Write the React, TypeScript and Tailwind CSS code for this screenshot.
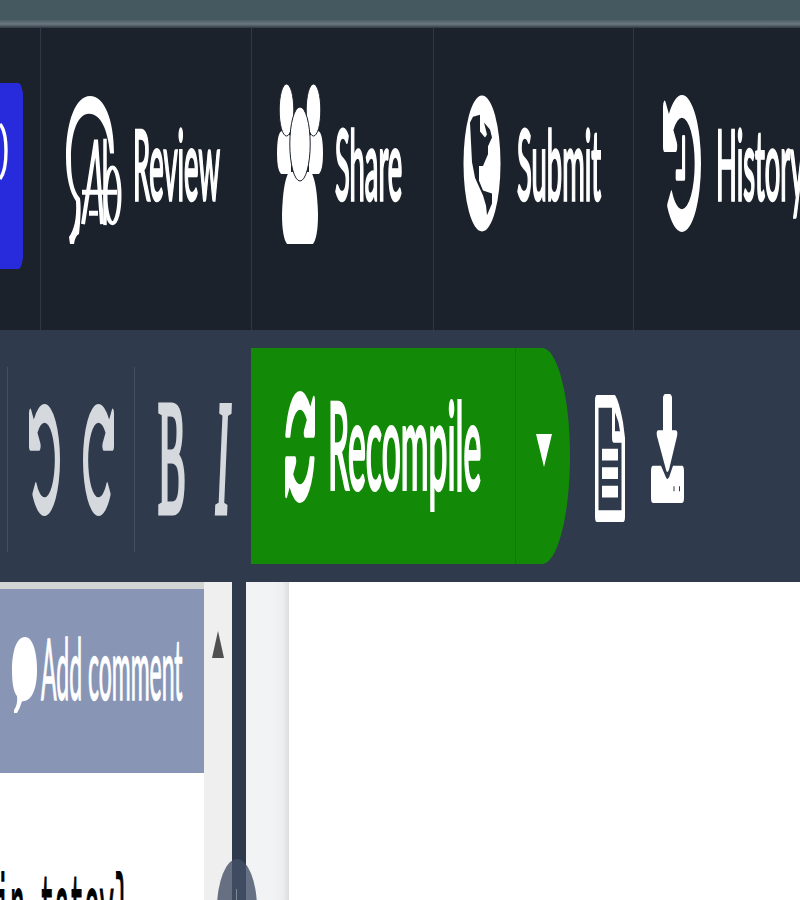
import type { ReactNode } from "react";

const UNDO =
  "M1664 896q0 156-61 298t-164 245-245 164-298 61q-172 0-327-72.5t-264-204.5q-7-10-6.5-22.5t8.5-20.5l137-138q10-9 25-9 16 2 23 12 73 95 179 147t225 52q104 0 198.5-40.5t163.5-109.5 109.5-163.5 40.5-198.5-40.5-198.5-109.5-163.5-163.5-109.5-198.5-40.5q-98 0-188 35.5t-160 101.5l137 138q31 30 14 69-17 40-59 40h-448q-26 0-45-19t-19-45v-448q0-42 40-59 39-17 69 14l130 129q107-101 244.5-156.5t284.5-55.5q156 0 298 61t245 164 164 245 61 298z";
const HAND =
  "M1024 608v448q0 14-9 23t-23 9h-320q-14 0-23-9t-9-23v-64q0-14 9-23t23-9h224v-352q0-14 9-23t23-9h64q14 0 23 9t9 23z";
const REFRESH =
  "M1639 1056q0 5-1 7-64 268-268 434.5t-478 166.5q-146 0-282.5-55t-243.5-157l-129 129q-19 19-45 19t-45-19-19-45v-448q0-26 19-45t45-19h448q26 0 45 19t19 45-19 45l-137 137q71 66 161 102t187 36q134 0 250-65t186-179q11-17 53-117 8-23 30-23h192q13 0 22.5 9.5t9.5 22.5zm25-800v448q0 26-19 45t-45 19h-448q-26 0-45-19t-19-45 19-45l138-138q-148-137-349-137-134 0-250 65t-186 179q-11 17-53 117-8 23-30 23h-199q-13 0-22.5-9.5t-9.5-22.5v-7q65-268 270-434.5t480-166.5q146 0 284 55.5t245 156.5l130-129q19-19 45-19t45 19 19 45z";

function Glyph({ box, className, children }: { box: string; className: string; children: ReactNode }) {
  return (
    <svg viewBox={box} preserveAspectRatio="none" fill="currentColor" className={`block shrink-0 overflow-visible ${className}`}>
      {children}
    </svg>
  );
}

// Tall, condensed label: full-size type squeezed horizontally inside a fixed box.
function Label({ children, box, type }: { children: string; box: string; type: string }) {
  return (
    <span className={`block shrink-0 ${box}`}>
      <span className={`block w-max origin-top-left whitespace-nowrap leading-none ${type}`}>{children}</span>
    </span>
  );
}

const NAV_TYPE = "scale-x-[0.282] text-[97px] [-webkit-text-stroke:3.5px_white]";

function NavBar() {
  return (
    <nav className="flex h-[302px] w-[840px] shrink-0 bg-[#1b222c] text-white">
      <div className="flex w-[41px] shrink-0 border-r border-[#2f3946] pt-[55px]">
        <div className="flex h-[186px] w-[23px] overflow-hidden rounded-r-[5px_14px] bg-[#282bdb] pt-[36px]">
          <Glyph box="0 0 9 66" className="h-[66px] w-[9px]">
            <path d="M0 5Q6 12 6 32T0 60" fill="none" stroke="currentColor" strokeWidth="3.4" />
          </Glyph>
        </div>
      </div>
      <div className="flex w-[211px] shrink-0 items-start border-r border-[#2f3946] pl-[25px] pt-[67px]">
        <Glyph box="0 0 56 150" className="h-[149px] w-[56px]">
          <path d="M48 59C48 24 38 1 24 1C10 1 0 26 0 62C0 83 4 98 10 107C11 125 8 136 3 143L4 150H8Q9 142 13 140C15 123 15 111 14 104C7 96 5 82 5 64C5 37 12 19 23 19C35 19 42 36 44 59Z" />
          <g fill="none" stroke="currentColor">
            <path d="M17 130L30 45L36 130" strokeWidth="4" />
            <path d="M16 98H51M23 119H32" strokeWidth="5" />
            <path d="M39 44V131" strokeWidth="3.5" />
            <ellipse cx="46.5" cy="101" rx="7" ry="28" strokeWidth="4" />
          </g>
        </Glyph>
        <Label box="ml-[11px] mt-[19px] h-[101px] w-[86px]" type={NAV_TYPE}>Review</Label>
      </div>
      <div className="flex w-[182px] shrink-0 items-start border-r border-[#2f3946] pl-[25px] pt-[54px]">
        <Glyph box="0 0 46 162" className="h-[162px] w-[46px]">
          <path d="M5 49L14 54V92H4Q0 88 0 72Q0 50 5 49M41 49L32 54V92H42Q46 88 46 72Q46 50 41 49" />
          <path d="M12 90Q6 99 5 132Q5 155 10 162H36Q41 155 41 132Q40 99 34 90Z" />
          <g stroke="#1b222c" strokeWidth="1">
            <ellipse cx="9.5" cy="28" rx="7.3" ry="26" />
            <ellipse cx="36.5" cy="28" rx="7.3" ry="26" />
            <ellipse cx="23" cy="62" rx="10.2" ry="37" />
          </g>
        </Glyph>
        <Label box="ml-[12px] mt-[32px] h-[101px] w-[69px]" type={NAV_TYPE}>Share</Label>
      </div>
      <div className="flex w-[200px] shrink-0 items-start border-r border-[#2f3946] pl-[29px] pt-[67px]">
        <Glyph box="0 0 38 139" className="h-[137px] w-[38px]">
          <ellipse cx="19" cy="69.5" rx="18.5" ry="69" />
          <path d="M7 28L10 22L17 20V37L22 43L24 40L21 28L27 35L29 43L25 52V60L20 72H16V87L20 97L29 100V110L24 122L23 112L20 102L12 84L9 68L8 48Z" fill="#1b222c" />
        </Glyph>
        <Label box="ml-[16px] mt-[19px] h-[101px] w-[87px]" type={NAV_TYPE}>Submit</Label>
      </div>
      <div className="flex shrink-0 items-start pl-[29px] pt-[67px]">
        <Glyph box="128 128 1536 1536" className="h-[137px] w-[38px]">
          <path d={UNDO} />
          <path d={HAND} />
        </Glyph>
        <Label box="ml-[15px] mt-[19px] h-[101px] w-[90px]" type={NAV_TYPE}>History</Label>
      </div>
    </nav>
  );
}

function Toolbar() {
  return (
    <div className="flex h-[252px] shrink-0 items-start bg-[#2f3a4c] text-white">
      <div className="mt-[37px] flex h-[185px] w-[251px] shrink-0 border-l border-transparent pl-[6px] text-[#d5d9dd]">
        <div className="flex w-[128px] shrink-0 border-x border-[#445061] pl-[21px] pt-[37px]">
          <Glyph box="128 128 1536 1536" className="h-[112px] w-[31px]">
            <path d={UNDO} />
          </Glyph>
          <Glyph box="128 128 1536 1536" className="ml-[23px] h-[112px] w-[31px] -scale-x-100">
            <path d={UNDO} />
          </Glyph>
        </div>
        <Label box="ml-[23px] mt-[11px] h-[160px] w-[28px] font-['Liberation_Serif',serif]" type="scale-x-[0.26] text-[160px] [-webkit-text-stroke:7px_#d5d9dd]">B</Label>
        <Label box="ml-[30px] mt-[11px] h-[160px] w-[17px] font-['Liberation_Serif',serif]" type="scale-x-[0.25] text-[160px] italic [-webkit-text-stroke:7px_#d5d9dd]">I</Label>
      </div>
      <div className="mt-[18px] flex h-[216px] w-[319px] shrink-0 overflow-hidden rounded-r-[28px_108px] bg-[#138a07]">
        <div className="flex w-[265px] shrink-0 border-r border-[#107a06] pl-[34px] pt-[43px]">
          <Glyph box="128 128 1536 1536" className="h-[112px] w-[30px]">
            <path d={REFRESH} />
          </Glyph>
          <Label box="ml-[13px] mt-[-8px] h-[128px] w-[154px]" type="scale-x-[0.281] text-[120px] [-webkit-text-stroke:4px_white]">Recompile</Label>
        </div>
        <Glyph box="0 0 16 33" className="ml-[20px] mt-[86px] h-[33px] w-[16px]">
          <path d="M0 0H16L8 33Z" />
        </Glyph>
      </div>
      <Glyph box="0 0 30 130" className="ml-[25px] mt-[65px] h-[127px] w-[30px]">
        <path fillRule="evenodd" d="M2 0H20Q24 6 28 28L30 44V124Q30 130 28 130H2Q0 130 0 124V6Q0 0 2 0M3.5 13V118H26.5V49H19Q17 49 17 43V13ZM20 18V37H25Q24 27 20 18" />
        <path d="M7 55H23V67H7M7 74H23V86H7M7 93H23V105H7Z" />
      </Glyph>
      <Glyph box="0 0 33 112" className="ml-[26px] mt-[64px] h-[110px] w-[33px]">
        <path d="M12 3Q13 0 14 0H19Q20 0 21 3V37H25Q27 38 26 43L18 77Q16 82 15 77L6 43Q5 38 7 37H12Z" />
        <path fillRule="evenodd" d="M2 73H10L15 85Q16 88 18 85L22 73H31Q33 73 33 79V106Q33 111 31 111H2Q0 111 0 106V79Q0 73 2 73M22.5 94V99H23.5V94ZM28 94V99H29V94Z" />
      </Glyph>
    </div>
  );
}

export default function App() {
  return (
    <div className="flex h-[900px] w-[800px] flex-col overflow-hidden bg-white font-[Lato,sans-serif]">
      <div className="h-[20px] shrink-0 bg-[#455961]" />
      <div className="h-[8px] shrink-0 bg-linear-to-b from-[#4c5f67] via-[#6b7880] via-50% to-[#303a44]" />
      <NavBar />
      <Toolbar />
      <main className="relative flex h-[318px] shrink-0">
        <section className="w-[204px] shrink-0 overflow-hidden border-t-[7px] border-[#d3d5d5] bg-white">
          <div className="flex h-[184px] bg-[#8895b5] pt-[48px] text-white">
            <Glyph box="0 0 25 77" className="ml-[12px] h-[76px] w-[25px]">
              <path d="M13 0C4 0 0 16 0 34Q0 54 5 60Q6 68 2 74V77H5Q8 72 10 65C20 66 25 52 25 34C25 16 21 0 13 0" />
            </Glyph>
            <Label box="ml-[4px] mt-[-11px] h-[90px] w-[142px]" type="scale-x-[0.272] text-[84.5px] [-webkit-text-stroke:1.5px_white]">Add comment</Label>
          </div>
          <Label box="ml-[-5px] mt-[96px] h-[60px] w-[130px] font-['Liberation_Mono',monospace] text-black" type="scale-x-[0.27] text-[92px] [-webkit-text-stroke:2px_black]">{"in tatoy}"}</Label>
        </section>
        <div className="w-[28px] shrink-0 bg-[#efefef] pt-[49px]">
          <Glyph box="0 0 12 27" className="ml-[8px] h-[27px] w-[12px]">
            <path d="M6 0L12 27H0Z" fill="#505050" />
          </Glyph>
        </div>
        <div className="w-[14px] shrink-0 bg-[#2f3a4c]" />
        <div className="w-[43px] shrink-0 bg-linear-to-r from-[#f1f3f5] from-60% via-[#eceef0] via-85% to-[#dbdddf]" />
        <div className="flex-1 bg-white" />
        <div className="absolute left-[217px] top-[277px] h-[100px] w-[40px] rounded-[50%] bg-[#445066]/80" />
        <div className="absolute left-[236px] top-[307px] h-[11px] w-px bg-[#7d8796]" />
      </main>
    </div>
  );
}
